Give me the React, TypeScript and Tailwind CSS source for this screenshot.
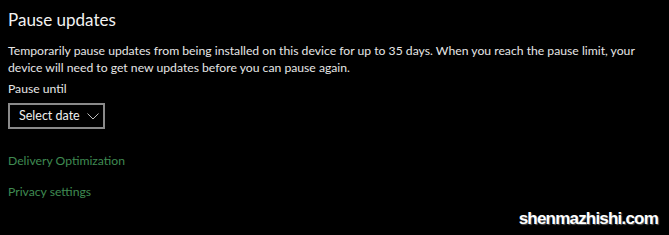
import React from 'react';

const App: React.FC = () => {
  return (
    <div className="relative w-[669px] h-[235px] bg-black overflow-hidden font-['Lato',sans-serif] text-white">
      <div className="pl-[8px] pt-[8px]">
        <h1 className="text-[17px] leading-[24px] font-normal text-[#f2f2f2]">Pause updates</h1>
        <p className="mt-[10px] text-[12.2px] leading-[17px] text-[#e6e6e6] whitespace-nowrap">
          Temporarily pause updates from being installed on this device for up to 35 days. When you reach the pause limit, your
          <br />
          device will need to get new updates before you can pause again.
        </p>
        <div className="mt-[4px] text-[12.2px] leading-[17px] text-[#e6e6e6]">Pause until</div>
        <button className="mt-[6px] flex items-center gap-[7px] h-[26px] pl-[9px] pr-[4px] border-2 border-[#8a8a8a] text-[12.5px] text-[#f0f0f0] whitespace-nowrap">
          <span>Select date</span>
          <svg width="12" height="7" viewBox="0 0 12 7" fill="none" stroke="#bdbdbd" strokeWidth="1">
            <path d="M0.5 0.5 L6 6 L11.5 0.5" />
          </svg>
        </button>
        <div className="mt-[23px] text-[12.2px] leading-[17px] text-[#3f8a52]">Delivery Optimization</div>
        <div className="mt-[14px] text-[12.2px] leading-[17px] text-[#3f8a52]">Privacy settings</div>
      </div>
      <div className="absolute right-[11px] bottom-[6px] font-['Liberation_Sans',sans-serif] font-bold text-[17px] leading-[20px] tracking-[-0.8px] text-white [text-shadow:1px_1px_1px_#555]">
        shenmazhishi.com
      </div>
    </div>
  );
};

export default App;
